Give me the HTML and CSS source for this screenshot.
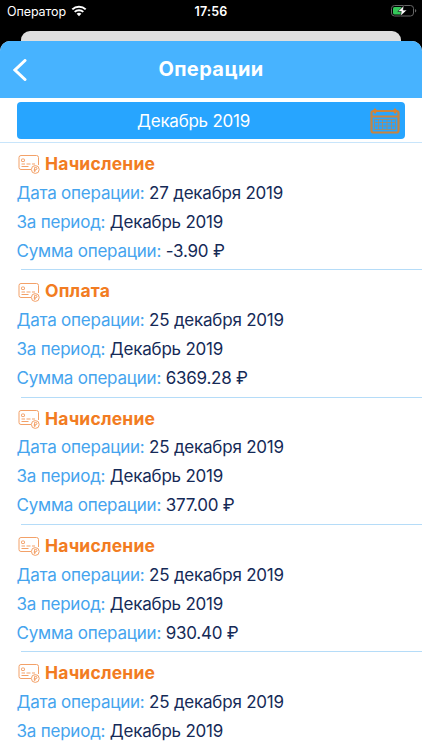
FILE: index.html
```
<!DOCTYPE html>
<html lang="ru">
<head>
  <meta charset="UTF-8">
  <title>Операции</title>
  <link rel="stylesheet" href="styles.css">
</head>
<body>
  <svg class="defs">
    <symbol id="card" viewBox="0 0 22 20">
      <path d="M13 15.500H3a2 2 0 0 1-2-2V3.500a2 2 0 0 1 2-2h15.500a2 2 0 0 1 2 2v7.500"/>
      <rect x="3.500" y="5" width="3" height="2.500" rx=".6"/>
      <path d="M3.500 10H7M8.500 10h4M14 10h3M3.500 12.500h7"/>
      <circle cx="17.300" cy="15.500" r="3.900"/>
      <path d="M16.600 17.800v-4.400h1.200a1.100 1.100 0 0 1 0 2.300h-2M15.800 16.800h2"/>
    </symbol>
  </svg>

  <div class="status">
    <span class="carrier">Оператор</span>
    <svg class="wifi" viewBox="0 0 16 12">
      <path d="M1.300 4.400a9.600 9.600 0 0 1 13.400 0M3.700 6.900a6.200 6.200 0 0 1 8.600 0"/>
      <path class="dot" d="M8 11.300 5.600 8.800a3.500 3.500 0 0 1 4.800 0z"/>
    </svg>
    <span class="time">17:56</span>
    <svg class="battery" viewBox="0 0 26 12">
      <rect class="frame" x=".5" y=".5" width="22" height="10.500" rx="3"/>
      <path class="cap" d="M24 4v3.600q1.300-.5 1.300-1.800T24 4z"/>
      <rect class="level" x="2" y="2" width="9" height="7.500" rx="1.500"/>
      <path class="bolt" d="M13 .5 6.800 6.500h3.500L9.300 11.300l6.700-6.200h-3.800z"/>
    </svg>
  </div>

  <div class="behind"></div>

  <div class="sheet">
    <div class="header">
      <svg class="back" viewBox="0 0 14 22"><path d="M12 1.500 2 11l10 9.500"/></svg>
      <h1>Операции</h1>
    </div>

    <div class="filter">
      <div class="month">
        <span>Декабрь 2019</span>
        <svg class="calendar" viewBox="0 0 30 26">
          <rect x="1.500" y="3" width="27" height="21.500" rx="2"/>
          <path d="M1.500 8.500h27"/>
          <path class="pin" d="M5 0l2.500 3L5 6 2.500 3zM25 0l2.500 3L25 6l-2.500-3z"/>
          <path class="grid" d="M4.500 11.500h21M4.500 14.500h21M4.500 18h21M4.500 21.500h21M4.500 11.500v10M8.500 11.500v10M12.500 11.500v10M17 11.500v10M21.500 11.500v10M25.500 11.500v10"/>
        </svg>
      </div>
    </div>

    <div class="list">
      <div class="item">
        <h2><svg class="card"><use href="#card"/></svg>Начисление</h2>
        <p><span>Дата операции:</span> <b>27 декабря 2019</b></p>
        <p><span>За период:</span> <b>Декабрь 2019</b></p>
        <p><span>Сумма операции:</span> <b>-3.90 ₽</b></p>
      </div>
      <div class="item">
        <h2><svg class="card"><use href="#card"/></svg>Оплата</h2>
        <p><span>Дата операции:</span> <b>25 декабря 2019</b></p>
        <p><span>За период:</span> <b>Декабрь 2019</b></p>
        <p><span>Сумма операции:</span> <b>6369.28 ₽</b></p>
      </div>
      <div class="item">
        <h2><svg class="card"><use href="#card"/></svg>Начисление</h2>
        <p><span>Дата операции:</span> <b>25 декабря 2019</b></p>
        <p><span>За период:</span> <b>Декабрь 2019</b></p>
        <p><span>Сумма операции:</span> <b>377.00 ₽</b></p>
      </div>
      <div class="item">
        <h2><svg class="card"><use href="#card"/></svg>Начисление</h2>
        <p><span>Дата операции:</span> <b>25 декабря 2019</b></p>
        <p><span>За период:</span> <b>Декабрь 2019</b></p>
        <p><span>Сумма операции:</span> <b>930.40 ₽</b></p>
      </div>
      <div class="item">
        <h2><svg class="card"><use href="#card"/></svg>Начисление</h2>
        <p><span>Дата операции:</span> <b>25 декабря 2019</b></p>
        <p><span>За период:</span> <b>Декабрь 2019</b></p>
      </div>
    </div>
  </div>
</body>
</html>
```
FILE: styles.css
```
* { box-sizing: border-box; }
body { margin: 0; height: 750px; overflow: hidden; background: #000; font-family: Inter, "Liberation Sans", sans-serif; }
h1, h2, p { margin: 0; }
b { font-weight: 400; color: #152a57; }
svg { fill: none; flex: none; }
.defs { display: none; }

.status { display: flex; align-items: center; height: 31px; padding: 0 5px 9px 7px; color: #fff; }
.carrier { width: 64px; font-size: 12.5px; letter-spacing: -0.1px; white-space: nowrap; }
.wifi { width: 16px; height: 12px; stroke: #fff; stroke-width: 2; }
.wifi .dot { fill: #fff; stroke: none; }
.time { width: 50px; margin-left: 99px; text-align: center; font-size: 12.5px; font-weight: 600; letter-spacing: 0.2px; }
.battery { width: 26px; height: 12px; margin-left: auto; }
.battery .frame { stroke: #666; }
.battery .cap { fill: #666; }
.battery .level { fill: #34c759; }
.battery .bolt { fill: #fff; stroke: #000; stroke-width: 0.6; }

.behind { height: 10px; margin: 0 21px; border-radius: 9px 9px 0 0; background: #dfdfdf; }

.sheet { height: 709px; border-radius: 10px 10px 0 0; background: #fff; overflow: hidden; }
.header { display: flex; align-items: center; height: 57px; padding: 0 13px; background: #47b3ff; color: #fff; }
.header h1 { flex: 1; margin-right: 14px; padding-bottom: 2px; text-align: center; font-size: 20px; font-weight: 700; letter-spacing: 0.4px; }
.back { width: 14px; height: 22px; stroke: #fff; stroke-width: 3; stroke-linecap: round; }

.filter { height: 45px; padding: 4px 17px 0; border-bottom: 1px solid #c8e5fb; }
.month { display: flex; align-items: center; height: 37px; padding-right: 5px; border-radius: 4px; background: #27a5ff; color: #fff; font-size: 17px; letter-spacing: -0.25px; }
.month span { flex: 1; text-align: center; }
.calendar { width: 30px; height: 26px; stroke: #c9843f; stroke-width: 2.2; }
.calendar .pin { fill: #d9822f; stroke: none; }
.calendar .grid { stroke-width: 0.8; opacity: 0.8; }

.item { height: 127.3px; padding: 6.800px 0 0 16.500px; background: linear-gradient(#b5dcf8, #b5dcf8) 21px 100% / 100% 1px no-repeat; font-size: 17px; line-height: 29px; letter-spacing: -0.22px; white-space: nowrap; }
.item h2 { display: flex; align-items: center; height: 29px; padding-bottom: 1.500px; color: #f27c22; font-size: 17.5px; font-weight: 700; letter-spacing: 0.2px; }
.item span { color: #45a4ee; }
.card { width: 22px; height: 20px; margin: 1.500px 5px 0 1.500px; stroke: #f3a168; stroke-width: 1; }
```
